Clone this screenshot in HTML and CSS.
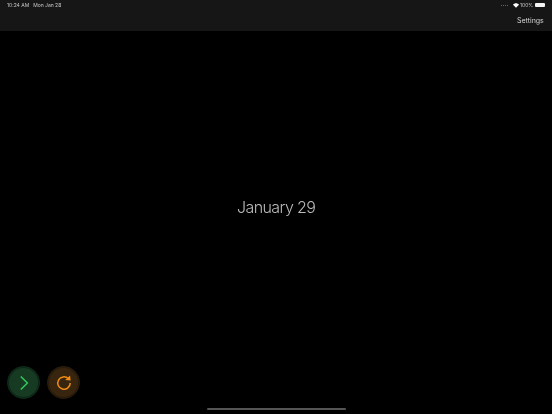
FILE: index.html
```html
<!DOCTYPE html>
<html lang="en">
<head>
<meta charset="utf-8">
<title>Date</title>
<link rel="stylesheet" href="styles.css">
</head>
<body>
<div class="app">
  <header class="top">
    <div class="status">
      <div class="status-left gray"><span>10:24 AM</span><span>Mon Jan 28</span></div>
      <div class="status-right gray">
        <span class="dots"><i></i><i></i><i></i><i></i></span>
        <svg class="wifi" width="6" height="5" viewBox="0 0 14 11"><path fill="#fff" d="M7 11 0 3.600C1.900 1.400 4.300.2 7 .2s5.100 1.200 7 3.400z"/></svg>
        <span>100%</span>
        <span class="battery"></span>
      </div>
    </div>
    <div class="nav"><span class="settings gray">Settings</span></div>
  </header>
  <main class="content"><h1 class="date gray">January 29</h1></main>
  <div class="actions">
    <button class="round go" aria-label="Next">
      <svg width="12" height="16" viewBox="0 0 12 16"><path d="M2.800 1.500 9.400 8l-6.600 6.500" fill="none" stroke="#33c95b" stroke-width="1.500"/></svg>
    </button>
    <button class="round redo" aria-label="Reload">
      <svg width="16" height="16" viewBox="0 0 16 16"><path d="M12.400 3.700A6.200 6.200 0 1 0 14.200 8" fill="none" stroke="#f08c14" stroke-width="1.500"/><path d="M9.200 5 14.600 5.600 14.100.6z" fill="#f08c14"/></svg>
    </button>
  </div>
  <div class="home-wrap"><div class="home"></div></div>
</div>
</body>
</html>
```
FILE: styles.css
```css
* { box-sizing: border-box; }
html, body { margin: 0; height: 100%; background: #000; }
body { font-family: Inter, "Liberation Sans", sans-serif; overflow: hidden; }
.app { width: 552px; height: 414px; display: flex; flex-direction: column; background: #000; }
.gray { will-change: transform; }
.top { height: 31px; background: #161616; flex: none; padding: 0 7px; }
.status { height: 10px; display: flex; justify-content: space-between; align-items: center; font-size: 5px; color: #c8c8c8; }
.status-left { display: flex; gap: 4px; }
.status-right { display: flex; align-items: center; gap: 1.500px; }
.dots { display: flex; gap: 1px; margin-right: 3px; }
.dots i { width: 1px; height: 1px; background: #666; }
.battery { width: 10px; height: 4px; background: #f4f4f4; border-radius: 1px; }
.nav { height: 21px; display: flex; justify-content: flex-end; align-items: center; padding-right: 1px; }
.settings { font-size: 7px; color: #d4d4d4; }
.content { flex: 1; display: flex; align-items: center; justify-content: center; padding-top: 17px; min-height: 0; }
.date { margin: 0; font-size: 16px; font-weight: 300; color: #bababa; letter-spacing: -0.6px; }
.actions { flex: none; display: flex; gap: 7px; padding-left: 7px; margin-bottom: 5px; }
.round { width: 33px; height: 33px; border-radius: 50%; padding: 0; display: flex; align-items: center; justify-content: center; }
.go { background: #163a22; border: 1px solid #10291a; box-shadow: inset 0 0 0 1px #0d2515; }
.redo { background: #38250f; border: 1px solid #2b1d0c; box-shadow: inset 0 0 0 1px #261908; }
.home-wrap { flex: none; height: 10px; display: flex; justify-content: center; padding-top: 4px; }
.home { width: 139px; height: 2px; border-radius: 1px; background: #555; }
```
